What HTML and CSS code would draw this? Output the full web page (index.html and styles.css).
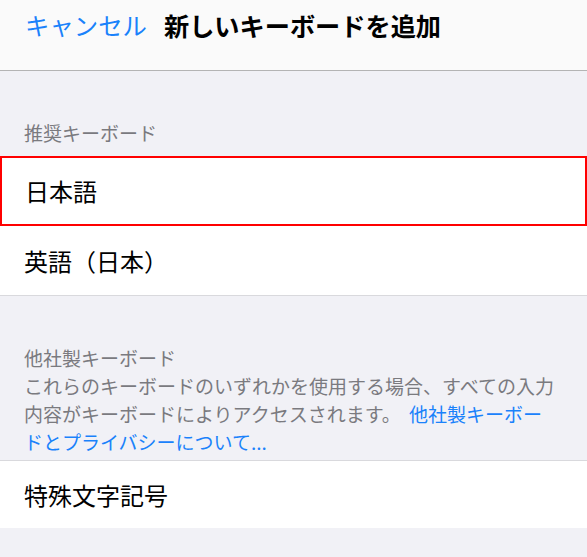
FILE: index.html
```html
<!DOCTYPE html>
<html lang="ja">
<head>
<meta charset="utf-8">
<title>新しいキーボードを追加</title>
<link rel="stylesheet" href="styles.css">
</head>
<body>
<header class="navbar">
  <a class="nav-cancel">キャンセル</a>
  <h1 class="nav-title">新しいキーボードを追加</h1>
</header>
<main class="content">
  <section class="group">
    <h2 class="group-header">推奨キーボード</h2>
    <ul class="list">
      <li class="cell cell-selected">日本語</li>
      <li class="cell cell-last">英語（日本）</li>
    </ul>
  </section>
  <section class="group">
    <div class="group-note">
      <p class="note-title">他社製キーボード</p>
      <p class="note-body">これらのキーボードのいずれかを使用する場合、すべての入力<br>内容がキーボードによりアクセスされます。 <a class="note-link">他社製キーボー<br>ドとプライバシーについて...</a></p>
    </div>
    <ul class="list list-top">
      <li class="cell cell-short">特殊文字記号</li>
    </ul>
  </section>
</main>
</body>
</html>
```

FILE: styles.css
```css
* {
  box-sizing: border-box;
}
html, body {
  margin: 0;
  padding: 0;
}
body {
  background: #f1f1f6;
  font-family: "Noto Sans CJK JP", "Noto Sans", sans-serif;
  color: #000;
  width: 587px;
  height: 557px;
  overflow: hidden;
}
.navbar {
  height: 71px;
  background: #fafafa;
  border-bottom: 1px solid #b4b4b4;
  display: flex;
  align-items: flex-start;
  gap: 17px;
  padding: 8px 24px 0 25px;
}
.nav-cancel {
  color: #1a82fb;
  font-size: 24.4px;
  line-height: 34px;
}
.nav-title {
  margin: 0;
  font-size: 25.2px;
  font-weight: 700;
  line-height: 34px;
}
.group-header {
  margin: 0;
  padding: 48px 24px 9px;
  font-size: 19px;
  font-weight: 400;
  line-height: 28px;
  color: #7a7a7f;
}
.list {
  list-style: none;
  margin: 0;
  padding: 0;
  background: #fff;
}
.list-top {
  border-top: 1px solid #d9d9dd;
}
.cell {
  display: flex;
  align-items: center;
  height: 70px;
  padding: 0 24px;
  font-size: 24px;
  line-height: 34px;
}
.cell-selected {
  border: 2px solid #ff0000;
  padding-left: 23px;
}
.cell-last {
  height: 70px;
  border-bottom: 1px solid #d9d9dd;
}
.cell-short {
  height: 67px;
}
.group-note {
  padding: 48px 24px 4px;
  font-size: 19px;
  line-height: 28px;
  color: #7a7a7f;
}
.note-title, .note-body {
  margin: 0;
}
.note-link {
  color: #1a82fb;
  margin-left: 4px;
}
```
